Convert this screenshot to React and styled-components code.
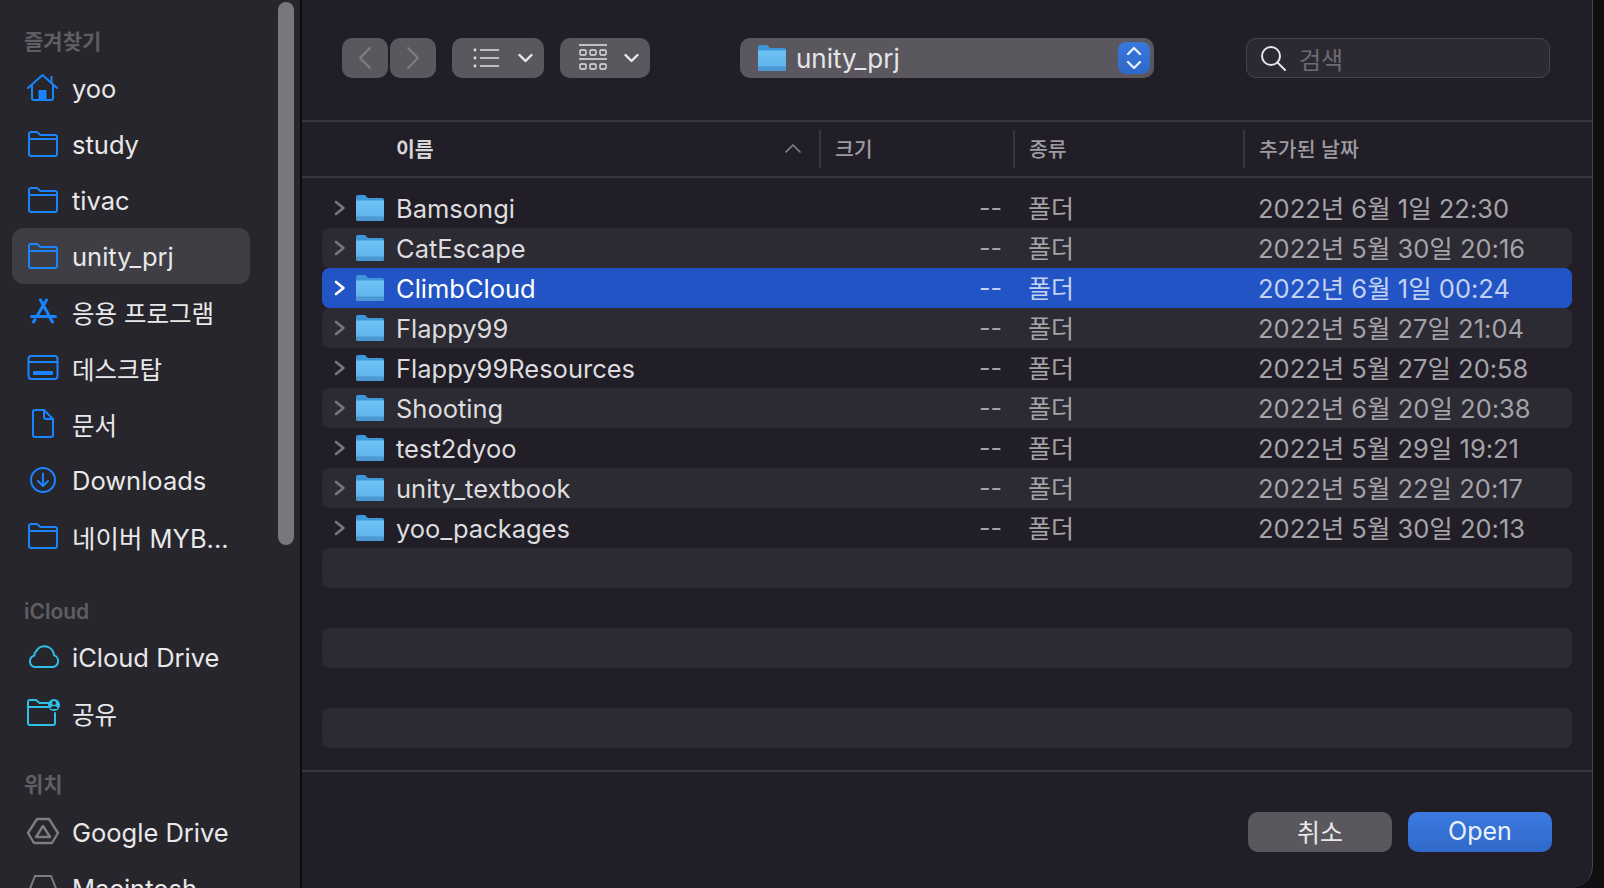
import styled, { createGlobalStyle } from 'styled-components';

const GlobalStyle = createGlobalStyle`
    html, body {
        margin: 0;
        padding: 0;
        height: 100%;
        background: #101012;
        overflow: hidden;
    }
    * { box-sizing: border-box; }
    #root {
        font-family: Inter, "Noto Sans CJK KR", sans-serif;
    }
`

const favorites = [
    { icon: 'home', label: 'yoo' },
    { icon: 'folder', label: 'study' },
    { icon: 'folder', label: 'tivac' },
    { icon: 'folder', label: 'unity_prj', selected: true },
    { icon: 'apps', label: '응용 프로그램', tight: true },
    { icon: 'desktop', label: '데스크탑', tight: true },
    { icon: 'doc', label: '문서', tight: true },
    { icon: 'download', label: 'Downloads' },
    { icon: 'folder', label: '네이버 MYB...' },
]

const files = [
    { name: 'Bamsongi', date: '2022년 6월 1일 22:30' },
    { name: 'CatEscape', date: '2022년 5월 30일 20:16' },
    { name: 'ClimbCloud', date: '2022년 6월 1일 00:24', selected: true },
    { name: 'Flappy99', date: '2022년 5월 27일 21:04' },
    { name: 'Flappy99Resources', date: '2022년 5월 27일 20:58' },
    { name: 'Shooting', date: '2022년 6월 20일 20:38' },
    { name: 'test2dyoo', date: '2022년 5월 29일 19:21' },
    { name: 'unity_textbook', date: '2022년 5월 22일 20:17' },
    { name: 'yoo_packages', date: '2022년 5월 30일 20:13' },
    {}, {}, {}, {}, {},
]

function SideIcon({ type }) {
    const common = { width: 34, height: 30, viewBox: '0 0 34 30', fill: 'none', stroke: 'currentColor', strokeWidth: 2, strokeLinecap: 'round', strokeLinejoin: 'round' }
    if (type === 'home') return (
        <svg {...common}>
            <path d="M2 15 L16.5 2 L31 15" />
            <path d="M25.5 4 V10" />
            <path d="M6 12 V25 a2 2 0 0 0 2 2 H25 a2 2 0 0 0 2 -2 V12" />
            <path d="M13.5 27 V18 H19.5 V27 Z" fill="currentColor" />
        </svg>
    )
    if (type === 'folder') return (
        <svg {...common}>
            <path d="M3 5 a2 2 0 0 1 2 -2 H11 L14.5 6 H29 a2 2 0 0 1 2 2 V25 a2 2 0 0 1 -2 2 H5 a2 2 0 0 1 -2 -2 Z" />
            <path d="M3 10 H31" />
        </svg>
    )
    if (type === 'apps') return (
        <svg {...common} strokeWidth="3">
            <path d="M14.5 3 L26.5 25" />
            <path d="M20.5 3 L11 19" />
            <path d="M5.5 19.5 H29.5" />
            <path d="M9 22.5 L7.5 25" />
        </svg>
    )
    if (type === 'desktop') return (
        <svg {...common}>
            <rect x="2.5" y="3" width="29" height="23" rx="3" />
            <path d="M3 9 H31" />
            <rect x="7" y="18" width="20" height="4" rx="1" fill="currentColor" stroke="none" />
        </svg>
    )
    if (type === 'doc') return (
        <svg {...common}>
            <path d="M7 3 a2 2 0 0 1 2 -2 H18 L27 10 V26 a2 2 0 0 1 -2 2 H9 a2 2 0 0 1 -2 -2 Z" />
            <path d="M18 1 V8 a2 2 0 0 0 2 2 H27" />
        </svg>
    )
    if (type === 'download') return (
        <svg {...common}>
            <circle cx="17" cy="15" r="12" />
            <path d="M17 8.5 V21" />
            <path d="M12 16 L17 21 L22 16" />
        </svg>
    )
    if (type === 'cloud') return (
        <svg {...common}>
            <path d="M8 25 H26 a6 6 0 0 0 2 -11.7 A9.5 9.5 0 0 0 10 9.5 A4 4 0 0 0 8.5 13.5 A6 6 0 0 0 8 25 Z" />
        </svg>
    )
    if (type === 'shared') return (
        <svg {...common}>
            <path d="M2 4 a2 2 0 0 1 2 -2 H10 L13.5 5 H23 M2 4 V25 a2 2 0 0 0 2 2 H27 a2 2 0 0 0 2 -2 V15" />
            <path d="M2 9 H22" />
            <circle cx="28" cy="7" r="6" fill="currentColor" stroke="none" />
            <circle cx="28" cy="5" r="2" fill="#27262c" stroke="none" />
            <path d="M24.5 11 a3.5 3 0 0 1 7 0 Z" fill="#27262c" stroke="none" />
        </svg>
    )
    if (type === 'drive') return (
        <svg {...common} strokeWidth="2.4" >
            <path d="M11 2 H23 L32 16 L26 26 H8 L2 16 Z" />
            <path d="M17 9 L24 20 H10 Z" />
        </svg>
    )
    return (
        <svg {...common}>
            <path d="M9 3 H25 L31 18 V25 a2 2 0 0 1 -2 2 H5 a2 2 0 0 1 -2 -2 V18 Z" />
            <path d="M3 18 H31" />
        </svg>
    )
}

function FolderFill() {
    return (
        <svg width="28" height="28" viewBox="0 0 28 28">
            <defs>
                <linearGradient id="folderBody" x1="0" y1="0" x2="0" y2="1">
                    <stop offset="0" stopColor="#6fc2f5" />
                    <stop offset="1" stopColor="#5cb0ea" />
                </linearGradient>
            </defs>
            <path d="M0 3 a2 2 0 0 1 2 -2 H9 L12 4 H26 a2 2 0 0 1 2 2 V10 H0 Z" fill="#3d97da" />
            <path d="M0 6.5 H28 V25 a2 2 0 0 1 -2 2 H2 a2 2 0 0 1 -2 -2 Z" fill="url(#folderBody)" />
            <path d="M0 22.5 H28 V25 a2 2 0 0 1 -2 2 H2 a2 2 0 0 1 -2 -2 Z" fill="#4a98d4" />
        </svg>
    )
}

function SidebarItem({ icon, label, selected, tight, color }) {
    return (
        <Item selected={selected} tight={tight}>
            <ItemIcon color={color}><SideIcon type={icon} /></ItemIcon>
            <span>{label}</span>
        </Item>
    )
}

export default function App() {
    return (
        <Window>
            <GlobalStyle />
            <Sidebar>
                <SectionLabel>즐겨찾기</SectionLabel>
                <ItemList pad={1}>
                    {favorites.map((f, i) => <SidebarItem key={i} {...f} color="#1a84ff" />)}
                </ItemList>
                <SectionLabel gap={33}>iCloud</SectionLabel>
                <ItemList>
                    <SidebarItem icon="cloud" label="iCloud Drive" color="#2fc0e6" />
                    <SidebarItem icon="shared" label="공유" tight color="#2fc0e6" />
                </ItemList>
                <SectionLabel gap={29}>위치</SectionLabel>
                <ItemList pad={2}>
                    <SidebarItem icon="drive" label="Google Drive" color="#7d7c80" />
                    <SidebarItem icon="disk" label="Macintosh" color="#7d7c80" />
                </ItemList>
                <ScrollThumb />
            </Sidebar>
            <Main>
                <Toolbar>
                    <NavGroup>
                        <ToolButton width={46} pl={15}>
                            <svg width="16" height="24" viewBox="0 0 16 24" fill="none" stroke="#817f85" strokeWidth="1.8" strokeLinecap="round" strokeLinejoin="round"><path d="M13 2 L3 12 L13 22" /></svg>
                        </ToolButton>
                        <ToolButton width={46} pl={15}>
                            <svg width="16" height="24" viewBox="0 0 16 24" fill="none" stroke="#817f85" strokeWidth="1.8" strokeLinecap="round" strokeLinejoin="round"><path d="M3 2 L13 12 L3 22" /></svg>
                        </ToolButton>
                    </NavGroup>
                    <ToolButton width={92} ml={16} pl={21} gap={18}>
                        <svg width="27" height="20" viewBox="0 0 27 20" fill="none" stroke="#e2e1e4" strokeWidth="1.5">
                            <path d="M7 2 H26 M7 10 H26 M7 18 H26" />
                            <circle cx="2" cy="2" r="1.4" fill="#e2e1e4" stroke="none" />
                            <circle cx="2" cy="10" r="1.4" fill="#e2e1e4" stroke="none" />
                            <circle cx="2" cy="18" r="1.4" fill="#e2e1e4" stroke="none" />
                        </svg>
                        <SmallChevron />
                    </ToolButton>
                    <ToolButton width={90} ml={16} pl={19} gap={17}>
                        <svg width="28" height="28" viewBox="0 0 28 28" fill="none" stroke="#e2e1e4" strokeWidth="1.4">
                            <path d="M0 1 H28 M0 15 H28" />
                            <rect x="1" y="6" width="6" height="5" rx="1.2" />
                            <rect x="11" y="6" width="6" height="5" rx="1.2" />
                            <rect x="21" y="6" width="6" height="5" rx="1.2" />
                            <rect x="1" y="20" width="6" height="5" rx="1.2" />
                            <rect x="11" y="20" width="6" height="5" rx="1.2" />
                            <rect x="21" y="20" width="6" height="5" rx="1.2" />
                        </svg>
                        <SmallChevron />
                    </ToolButton>
                    <PathSelect>
                        <PathName>
                            <FolderFill />
                            <span>unity_prj</span>
                        </PathName>
                        <Stepper>
                            <svg width="18" height="26" viewBox="0 0 18 26" fill="none" stroke="#e6eefc" strokeWidth="2.4" strokeLinecap="round" strokeLinejoin="round">
                                <path d="M3 9 L9 3 L15 9" />
                                <path d="M3 17 L9 23 L15 17" />
                            </svg>
                        </Stepper>
                    </PathSelect>
                    <SearchBox>
                        <svg width="26" height="26" viewBox="0 0 26 26" fill="none" stroke="#e6e5e8" strokeWidth="2" strokeLinecap="round">
                            <circle cx="11" cy="11" r="9" />
                            <path d="M17.5 17.5 L25 25" />
                        </svg>
                        <span>검색</span>
                    </SearchBox>
                </Toolbar>
                <ColumnHeader>
                    <NameHead>
                        <span>이름</span>
                        <svg width="16" height="10" viewBox="0 0 16 10" fill="none" stroke="#88868b" strokeWidth="1.6" strokeLinecap="round" strokeLinejoin="round"><path d="M1 9 L8 2 L15 9" /></svg>
                    </NameHead>
                    <HeadCell width={194}>크기</HeadCell>
                    <HeadCell width={230}>종류</HeadCell>
                    <HeadCell width={349}>추가된 날짜</HeadCell>
                </ColumnHeader>
                <FileList>
                    {files.map((f, i) => (
                        <FileRow key={i} striped={i % 2 === 1} selected={f.selected}>
                            {f.name && (
                                <>
                                    <Chevron selected={f.selected}>
                                        <svg width="12" height="16" viewBox="0 0 12 16" fill="none" stroke="currentColor" strokeWidth="2.6" strokeLinecap="round" strokeLinejoin="round"><path d="M2 2 L9.5 8 L2 14" /></svg>
                                    </Chevron>
                                    <FolderFill />
                                    <FileName selected={f.selected}>{f.name}</FileName>
                                    <FileSize selected={f.selected}>--</FileSize>
                                    <FileKind selected={f.selected}>폴더</FileKind>
                                    <FileDate selected={f.selected}>{f.date}</FileDate>
                                </>
                            )}
                        </FileRow>
                    ))}
                </FileList>
                <Footer>
                    <DialogButton>취소</DialogButton>
                    <DialogButton primary>Open</DialogButton>
                </Footer>
            </Main>
        </Window>
    )
}

const Window = styled.div`
    display: flex;
    width: 1604px;
    height: 888px;
    overflow: hidden;
    background: #101012;
`
const Sidebar = styled.aside`
    position: relative;
    flex: 0 0 302px;
    height: 888px;
    padding-top: 27px;
    overflow: hidden;
    background: #27262c;
    border-right: 2px solid #0c0c0e;
`
const SectionLabel = styled.div`
    height: 32px;
    margin-top: ${props => props.gap || 0}px;
    padding-left: 24px;
    font-size: 21px;
    font-weight: 600;
    line-height: 30px;
    color: #5f5e63;
`
const ItemList = styled.div`
    display: flex;
    flex-direction: column;
    padding-top: ${props => props.pad || 0}px;
`
const Item = styled.div`
    display: flex;
    align-items: center;
    flex: 0 0 56px;
    width: 238px;
    margin-left: 12px;
    padding-left: 14px;
    border-radius: 12px;
    font-size: ${props => props.tight ? 24.5 : 25.5}px;
    color: #e9e8ea;
    white-space: nowrap;
    background: ${props => props.selected ? '#3f3e44' : 'transparent'};
`
const ItemIcon = styled.span`
    display: flex;
    width: 46px;
    color: ${props => props.color};
`
const ScrollThumb = styled.div`
    position: absolute;
    top: 2px;
    left: 278px;
    width: 16px;
    height: 543px;
    border-radius: 8px;
    background: #79777e;
`
const Main = styled.main`
    display: flex;
    flex-direction: column;
    flex: 0 0 1291px;
    height: 888px;
    background: #211e27;
    border-right: 1px solid #45444a;
    border-bottom-right-radius: 22px;
    overflow: hidden;
`
const Toolbar = styled.div`
    display: flex;
    align-items: center;
    flex: 0 0 122px;
    padding: 0 42px 4px 40px;
    border-bottom: 2px solid #38363d;
`
const NavGroup = styled.div`
    display: flex;
    gap: 2px;
`
const ToolButton = styled.div`
    display: flex;
    align-items: center;
    gap: ${props => props.gap || 0}px;
    width: ${props => props.width}px;
    height: 40px;
    margin-left: ${props => props.ml || 0}px;
    padding-left: ${props => props.pl}px;
    border-radius: 10px;
    background: #5a585e;
`
const ChevronSvg = styled.svg`
    flex: none;
`
const SmallChevron = () => (
    <ChevronSvg width="15" height="10" viewBox="0 0 15 10" fill="none" stroke="#e8e7ea" strokeWidth="2.4" strokeLinecap="round" strokeLinejoin="round">
        <path d="M1.5 2 L7.5 8 L13.5 2" />
    </ChevronSvg>
)
const PathSelect = styled.div`
    display: flex;
    align-items: center;
    justify-content: space-between;
    width: 414px;
    height: 40px;
    margin-left: 90px;
    padding: 0 4px 0 18px;
    border-radius: 10px;
    background: #5a585e;
`
const PathName = styled.div`
    display: flex;
    align-items: center;
    gap: 10px;
    font-size: 26px;
    color: #e6e5e8;
`
const Stepper = styled.div`
    display: flex;
    align-items: center;
    justify-content: center;
    width: 32px;
    height: 32px;
    border-radius: 8px;
    background: linear-gradient(#3a78de, #2e68c8);
`
const SearchBox = styled.div`
    display: flex;
    align-items: center;
    gap: 13px;
    width: 304px;
    height: 40px;
    margin-left: auto;
    padding-left: 13px;
    border: 1px solid #45434b;
    border-radius: 10px;
    font-size: 24px;
    color: #6d6b71;
    background: #2c2933;
`
const ColumnHeader = styled.div`
    display: flex;
    align-items: center;
    flex: 0 0 56px;
    border-bottom: 2px solid #38363d;
`
const HeadCell = styled.div`
    display: flex;
    align-items: center;
    width: ${props => props.width}px;
    height: 38px;
    padding: 0 0 3px 14px;
    border-left: 2px solid #38363d;
    font-size: 20.5px;
    font-weight: 500;
    color: #9c9b9f;
`
const NameHead = styled.div`
    display: flex;
    align-items: center;
    justify-content: space-between;
    width: 517px;
    height: 38px;
    padding: 0 18px 3px 94px;
    font-size: 20.5px;
    font-weight: 600;
    color: #d6d5d8;
`
const FileList = styled.div`
    display: flex;
    flex-direction: column;
    flex: 1;
    padding: 10px 20px 0;
`
const FileRow = styled.div`
    display: flex;
    align-items: center;
    flex: 0 0 40px;
    padding-left: 12px;
    border-radius: 8px;
    font-size: 25px;
    background: ${props => props.selected ? '#2254c5' : props.striped ? '#2c2a33' : 'transparent'};
`
const Chevron = styled.span`
    display: flex;
    width: 22px;
    color: ${props => props.selected ? '#ffffff' : '#77767a'};
`
const FileName = styled.span`
    width: 554px;
    margin-left: 12px;
    padding-top: 1px;
    font-size: 25.5px;
    color: ${props => props.selected ? '#ffffff' : '#dddcdf'};
`
const FileSize = styled.span`
    width: 52px;
    text-align: right;
    color: ${props => props.selected ? '#c3d2f3' : '#a5a3a8'};
`
const FileKind = styled.span`
    width: 230px;
    margin-left: 26px;
    padding-bottom: 2px;
    color: ${props => props.selected ? '#c3d2f3' : '#a5a3a8'};
`
const FileDate = styled.span`
    padding-bottom: 3px;
    font-size: 25.5px;
    white-space: nowrap;
    color: ${props => props.selected ? '#c3d2f3' : '#a5a3a8'};
`
const Footer = styled.div`
    display: flex;
    justify-content: flex-end;
    gap: 16px;
    flex: 0 0 118px;
    padding: 40px 40px 0 0;
    border-top: 2px solid #38363d;
`
const DialogButton = styled.div`
    display: flex;
    align-items: center;
    justify-content: center;
    width: 144px;
    height: 40px;
    padding-bottom: 3px;
    border-radius: 10px;
    font-size: 25px;
    color: ${props => props.primary ? '#eaf1fd' : '#e9e8ea'};
    background: ${props => props.primary ? 'linear-gradient(#3c7ae0, #2f69c9)' : '#5a585e'};
`
